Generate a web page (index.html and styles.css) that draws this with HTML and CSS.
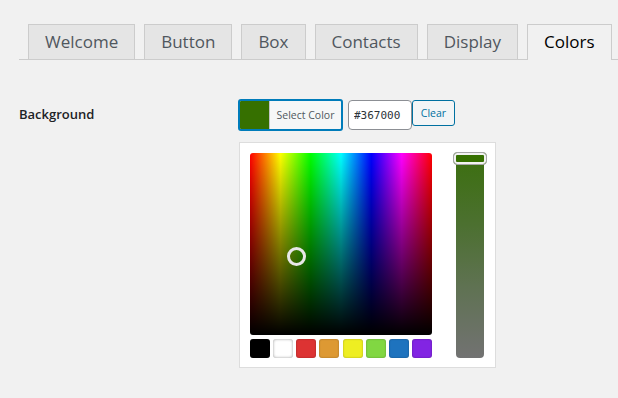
FILE: index.html
```html
<!DOCTYPE html>
<html>
<head>
<meta charset="utf-8">
<link rel="stylesheet" href="styles.css">
</head>
<body>
<div class="wrap">
  <nav class="tabs">
    <a class="tab">Welcome</a>
    <a class="tab">Button</a>
    <a class="tab">Box</a>
    <a class="tab">Contacts</a>
    <a class="tab">Display</a>
    <a class="tab active">Colors</a>
  </nav>
  <div class="row">
    <div class="label">Background</div>
    <div class="field">
      <div class="controls">
        <button class="select"><span class="swatch-cur"></span><span class="select-text">Select Color</span></button>
        <input class="hex" type="text" value="#367000">
        <button class="clear">Clear</button>
      </div>
      <div class="picker">
        <div class="left">
          <div class="square">
            <span class="circle"></span>
          </div>
          <div class="palette">
            <span class="sw" style="background:#000000"></span>
            <span class="sw sw-white" style="background:#ffffff"></span>
            <span class="sw" style="background:#dd3333"></span>
            <span class="sw" style="background:#dd9933"></span>
            <span class="sw" style="background:#eeee22"></span>
            <span class="sw" style="background:#81d742"></span>
            <span class="sw" style="background:#1e73be"></span>
            <span class="sw" style="background:#8224e3"></span>
          </div>
        </div>
        <div class="strip">
          <span class="handle"></span>
        </div>
      </div>
    </div>
  </div>
</div>
</body>
</html>
```
FILE: styles.css
```css
* { box-sizing: border-box; }
body {
  margin: 0;
  background: #f1f1f1;
  font-family: "Open Sans", "Noto Sans", sans-serif;
  color: #1d2327;
}
.wrap {
  padding: 24px 0 0 19px;
}
.tabs {
  display: flex;
  gap: 9px;
  padding-left: 9px;
  border-bottom: 1px solid #cccccc;
  height: 36px;
}
.tab {
  display: block;
  height: 35px;
  line-height: 33px;
  padding: 0 16px;
  font-size: 17px;
  color: #50575e;
  background: #e5e5e5;
  border: 1px solid #cccccc;
  border-bottom: none;
}
.tab.active {
  background: #f1f1f1;
  color: #000000;
  height: 36px;
}
.row {
  display: grid;
  grid-template-columns: 219px 1fr;
  margin-top: 39px;
}
.label {
  font-size: 13px;
  font-weight: 600;
  line-height: 31px;
  color: #1d2327;
}
.controls {
  display: flex;
  align-items: flex-start;
}
.select {
  display: flex;
  align-items: stretch;
  width: 105px;
  height: 32px;
  padding: 0;
  border: 2px solid #007cba;
  border-radius: 3px;
  background: #f6f7f7;
  overflow: hidden;
  font-family: inherit;
  cursor: pointer;
}
.swatch-cur {
  width: 30px;
  background: #367000;
  border-right: 1px solid #c3c4c7;
}
.select-text {
  flex: 1;
  font-size: 10.5px;
  line-height: 28px;
  color: #50575e;
  text-align: center;
}
.hex {
  margin: 1px 0 0 5px;
  width: 64px;
  height: 30px;
  padding: 0 0 0 5px;
  border: 1px solid #8c8f94;
  border-radius: 4px;
  background: #ffffff;
  font-family: "DejaVu Sans Mono", monospace;
  font-size: 11px;
  color: #2c3338;
}
.clear {
  margin: 1px 0 0 0;
  width: 43px;
  height: 26px;
  padding: 0;
  border: 1px solid #0071a1;
  border-radius: 3px;
  background: #f3f5f6;
  color: #0071a1;
  font-family: inherit;
  font-size: 10.5px;
}
.picker {
  display: flex;
  margin: 11px 0 0 1px;
  width: 257px;
  height: 226px;
  padding: 10px 11px 9px 10px;
  background: #ffffff;
  border: 1px solid #dddddd;
  gap: 24px;
}
.left {
  width: 182px;
}
.square {
  position: relative;
  width: 182px;
  height: 182px;
  border-radius: 3px;
  background:
    linear-gradient(to bottom, rgba(0,0,0,0), #000000),
    linear-gradient(to right, #ff0000, #ffff00, #00ff00, #00ffff, #0000ff, #ff00ff, #ff0000);
}
.circle {
  position: absolute;
  left: 37px;
  top: 94px;
  width: 19px;
  height: 19px;
  border: 3px solid #e8e8e8;
  border-radius: 50%;
}
.palette {
  display: flex;
  justify-content: space-between;
  margin-top: 4px;
}
.sw {
  width: 20px;
  height: 19px;
  border-radius: 3px;
  box-shadow: inset 0 0 2px rgba(0,0,0,0.35);
}
.sw-white {
  box-shadow: inset 0 0 3px rgba(0,0,0,0.4);
}
.strip {
  position: relative;
  width: 28px;
  height: 205px;
  border-radius: 0 0 4px 4px;
  background: linear-gradient(to bottom, #3b6f0e 0%, #4c7030 35%, #5f7252 65%, #727272 100%);
}
.handle {
  position: absolute;
  left: -3px;
  top: -1px;
  width: 34px;
  height: 13px;
  border: 1px solid #a7a7a7;
  border-radius: 4px;
  background: #367000;
  box-shadow: inset 0 0 0 2px #f2f2f2;
}
```
